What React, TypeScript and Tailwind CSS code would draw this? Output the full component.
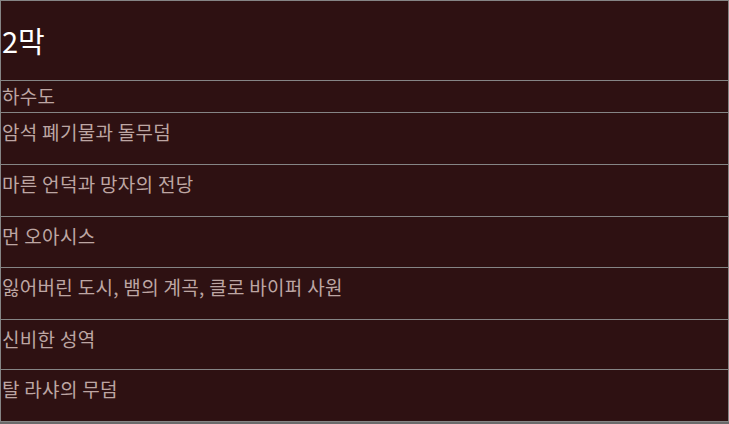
import React from 'react';

const places: { name: string; h: string }[] = [
  { name: '암석 폐기물과 돌무덤', h: 'h-[52px]' },
  { name: '마른 언덕과 망자의 전당', h: 'h-[52px]' },
  { name: '먼 오아시스', h: 'h-[51px]' },
  { name: '잃어버린 도시, 뱀의 계곡, 클로 바이퍼 사원', h: 'h-[52px]' },
  { name: '신비한 성역', h: 'h-[50px]' },
  { name: '탈 라샤의 무덤', h: 'h-[52px]' },
];

const App: React.FC = () => {
  return (
    <div
      className="w-[729px] h-[424px] bg-[#6a6a6a] overflow-hidden"
      style={{ fontFamily: '"Noto Sans CJK KR", "Noto Sans", sans-serif' }}
    >
      <div className="bg-[#2e1112] border-t border-x border-[#858585] flex flex-col">
        {/* act title */}
        <div className="h-[80px] flex items-center border-b border-[#858585] px-[1px]">
          <h1 className="text-[29px] leading-none text-white">2막</h1>
        </div>

        <div className="h-[32px] border-b border-[#858585] px-[1px] pt-[3px]">
          <span className="text-[19px] tracking-[0.3px] leading-[24px] text-[#bda6a3]">하수도</span>
        </div>

        {places.map((p) => (
          <div key={p.name} className={`${p.h} border-b border-[#858585] px-[1px] pt-[7px]`}>
            <span className="text-[19px] tracking-[0.3px] leading-[24px] text-[#bda6a3]">{p.name}</span>
          </div>
        ))}
      </div>
    </div>
  );
};

export default App;
